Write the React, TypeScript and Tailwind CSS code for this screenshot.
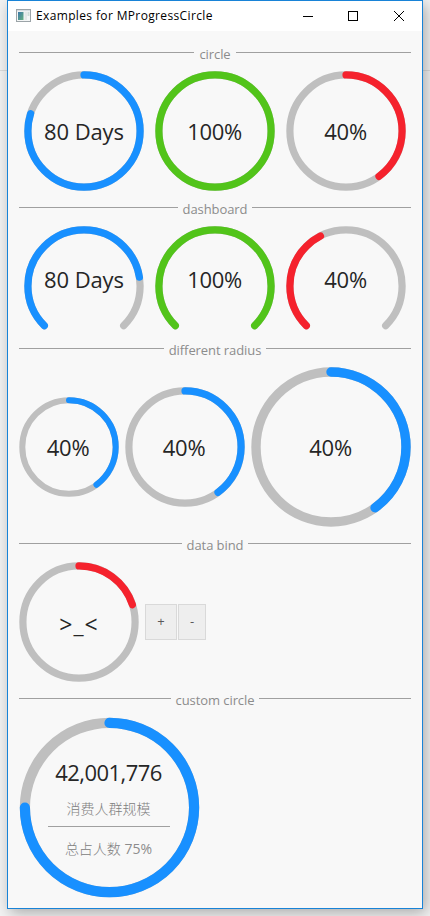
import React from "react";

const BLUE = "#1890ff";
const GREEN = "#52c41a";
const RED = "#f5222d";
const TRACK = "#bfbfbf";

type GaugeProps = {
  size: number;
  stroke: number;
  percent: number;
  color: string;
  dashboard?: boolean;
  height?: number;
  inset?: number;
  children?: React.ReactNode;
};

function Gauge({ size, stroke, percent, color, dashboard = false, height = size, inset = 0.3, children }: GaugeProps) {
  const c = size / 2;
  const r = (size - stroke) / 2 - inset;
  const span = dashboard ? 75 : 100;
  const rotation = dashboard ? 135 : -90;
  const shared = {
    cx: c,
    cy: c,
    r,
    fill: "none",
    strokeWidth: stroke,
    pathLength: 100,
    strokeLinecap: "round" as const,
    transform: `rotate(${rotation} ${c} ${c})`,
  };
  return (
    <div className="grid shrink-0 place-items-center" style={{ width: size, height }}>
      <svg className="col-start-1 row-start-1" width={size} height={height} viewBox={`0 0 ${size} ${height}`}>
        <circle {...shared} stroke={TRACK} strokeDasharray={`${span} 200`} />
        <circle {...shared} stroke={color} strokeDasharray={`${(span * percent) / 100} 200`} />
      </svg>
      <div className="col-start-1 row-start-1 whitespace-nowrap text-[22px] leading-[30px] text-[#262626]">{children}</div>
    </div>
  );
}

function Divider({ children }: { children: string }) {
  return (
    <div className="mt-1.5 mb-2 flex h-[21px] items-center gap-[5px]">
      <div className="h-px flex-1 bg-[#a0a0a0]" />
      <span className="mt-[3px] text-[13px] leading-[18px] tracking-[-0.08px] text-[#8c8c8c]">{children}</span>
      <div className="h-px flex-1 bg-[#a0a0a0]" />
    </div>
  );
}

export default function App() {
  return (
    <div className="h-[916px] w-[430px] overflow-hidden bg-[linear-gradient(#f3f3f3_70px,#dcdcdc_70px,#dcdcdc_71px,#f3f3f3_71px)] pl-[7px] font-['Open_Sans','Noto_Sans_CJK_SC',sans-serif]">
      <div className="h-[909px] w-[416px] border border-[#1883d7] bg-[#f8f8f8] shadow-[3px_4px_14px_rgba(0,0,0,0.3)]">
        <header className="flex h-[30px] items-center bg-white pl-2">
          <svg width="16" height="14" viewBox="0 0 16 14">
            <defs>
              <linearGradient id="screen" x1="0" y1="0" x2="1" y2="1">
                <stop offset="0" stopColor="#3c78a8" />
                <stop offset="1" stopColor="#66b080" />
              </linearGradient>
            </defs>
            <rect x="0.5" y="0.5" width="14" height="12" fill="#f4f6f6" stroke="#9ca4a8" />
            <rect x="1" y="1" width="13" height="1.2" fill="#d6dce0" />
            <rect x="2" y="3" width="5.5" height="8" fill="url(#screen)" />
            <rect x="8.5" y="3" width="2.5" height="8" fill="#e3e7e7" />
            <rect x="11.5" y="3" width="2" height="4" fill="#cfdcd8" />
          </svg>
          <h1 className="ml-1 text-[12px] leading-4 tracking-[0.36px] text-black">Examples for MProgressCircle</h1>
          <div className="ml-auto flex items-center pr-[18px]">
            <svg className="mr-[35px]" width="10" height="10" viewBox="0 0 10 10"><path d="M0 5.5H10" stroke="#000" /></svg>
            <svg className="mr-9" width="10" height="10" viewBox="0 0 10 10"><rect x="0.5" y="0.5" width="9" height="9" fill="none" stroke="#000" /></svg>
            <svg width="10" height="10" viewBox="0 0 10 10"><path d="M0 0L10 10M10 0L0 10" stroke="#000" /></svg>
          </div>
        </header>

        <main className="pt-[5px] pr-[11px] pl-[11px]">
          <Divider>circle</Divider>
          <div className="flex gap-[11px] pl-[5px]">
            <Gauge size={120} stroke={7.2} percent={80} color={BLUE}><span className="tracking-[-0.1px]">80 Days</span></Gauge>
            <Gauge size={120} stroke={7.2} percent={100} color={GREEN}><span className="mr-px tracking-[-0.3px]">100%</span></Gauge>
            <Gauge size={120} stroke={7.2} percent={40} color={RED}><span className="mr-px tracking-[-0.2px]">40%</span></Gauge>
          </div>

          <Divider>dashboard</Divider>
          <div className="flex gap-[11px] pl-[5px]">
            <Gauge dashboard size={120} height={106} stroke={7.2} percent={80} color={BLUE}><span className="tracking-[-0.1px]">80 Days</span></Gauge>
            <Gauge dashboard size={120} height={106} stroke={7.2} percent={100} color={GREEN}><span className="mr-px tracking-[-0.3px]">100%</span></Gauge>
            <Gauge dashboard size={120} height={106} stroke={7.2} percent={40} color={RED}><span className="mr-px tracking-[-0.2px]">40%</span></Gauge>
          </div>

          <Divider>different radius</Divider>
          <div className="flex items-center gap-1.5">
            <Gauge size={100} stroke={6} percent={40} color={BLUE}><span className="mr-0.5 tracking-[-0.2px]">40%</span></Gauge>
            <Gauge size={120} stroke={7.2} percent={40} color={BLUE}><span className="mr-0.5 tracking-[-0.2px]">40%</span></Gauge>
            <Gauge size={160} stroke={9.4} percent={40} color={BLUE}><span className="mr-px tracking-[-0.2px]">40%</span></Gauge>
          </div>

          <Divider>data bind</Divider>
          <div className="flex items-center">
            <Gauge size={120} stroke={7.2} percent={20} color={RED}><div className="pt-[3px] text-[23px] tracking-[1px]">&gt;_&lt;</div></Gauge>
            <button className="ml-1.5 h-9 w-8 border border-[#d9d9d9] bg-[#eeeeee] text-[13px] text-[#595959]">+</button>
            <button className="ml-px h-9 w-7 border border-[#d9d9d9] bg-[#eeeeee] text-[13px] text-[#595959]">-</button>
          </div>

          <Divider>custom circle</Divider>
          <Gauge size={181} stroke={10.2} inset={0.8} percent={75} color={BLUE}>
            <div className="mr-0.5 flex w-[122px] flex-col items-center pt-px">
              <div className="tracking-[-0.55px]">42,001,776</div>
              <div className="mt-[11px] text-[14px] leading-[22px] font-light text-[#808080]">消费人群规模</div>
              <div className="mt-1.5 h-px w-full bg-[#a0a0a0]" />
              <div className="mt-[11px] text-[14px] leading-[22px] font-light text-[#808080]">总占人数 <span className="font-normal text-[#8c8c8c]">75%</span></div>
            </div>
          </Gauge>
        </main>
      </div>
    </div>
  );
}
